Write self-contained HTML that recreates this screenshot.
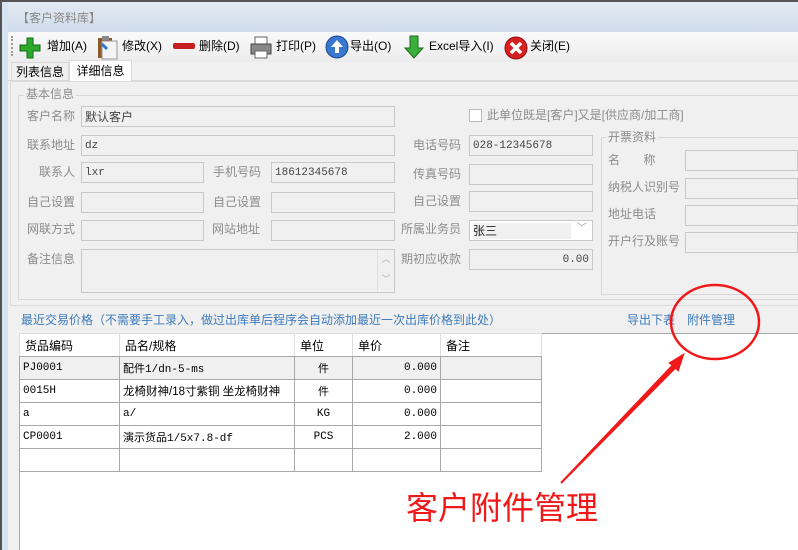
<!DOCTYPE html>
<html><head><meta charset="utf-8"><style>
*{margin:0;padding:0;box-sizing:border-box}
body{width:798px;height:550px;overflow:hidden;background:#f0f0f0;font-family:"Liberation Sans","Noto Sans CJK SC",sans-serif;font-size:12px;color:#000;position:relative}
.a{position:absolute}
.lbl{position:absolute;color:#8c8c8c;font-size:12px;line-height:20px}
.in{position:absolute;border:1px solid #c8c8c8;background:#f0f0f0;height:21px;font-family:"Liberation Mono","Noto Sans CJK SC",monospace;font-size:11px;color:#444;padding:1px 3px 0;line-height:14px;display:flex;align-items:center}
.tb{position:absolute;top:37px;font-size:12px;line-height:18px}
table{border-collapse:collapse;font-size:11px}
td{border:1px solid #a8a8a8;height:23px;padding:0 3px;font-family:"Liberation Mono","Noto Sans CJK SC",monospace;white-space:nowrap;vertical-align:middle}
th{border:1px solid #ddd;border-bottom:1px solid #a8a8a8;height:23px;font-weight:normal;text-align:left;padding:0 5px;font-family:"Liberation Sans","Noto Sans CJK SC",sans-serif;font-size:12px}
</style></head><body>
<div class="a" style="left:0;top:0;width:798px;height:32px;background:linear-gradient(#e4ebf3,#cfdcea)"></div>
<div class="a" style="left:0;top:0;width:798px;height:2px;background:#555"></div>
<div class="a" style="left:0;top:0;width:2px;height:550px;background:#555"></div>
<div class="a" style="left:2px;top:2px;width:6px;height:548px;background:#d6e4f2"></div>
<div class="a" style="left:17px;top:9px;color:#888;font-size:12px">【客户资料库】</div>
<div class="a" style="left:8px;top:32px;width:790px;height:30px;background:linear-gradient(#fafafa,#ececec)"></div>
<div class="a" style="left:11px;top:36px;width:2px;height:20px;border-left:2px dotted #999"></div>
<svg class="a" style="left:18px;top:36px" width="24" height="24"><path d="M9 2h6v7h7v6h-7v7H9v-7H2V9h7z" fill="#2daa2d" stroke="#156815"/></svg>
<div class="tb" style="left:47px">增加(A)</div>
<svg class="a" style="left:96px;top:35px" width="24" height="25"><rect x="2" y="3" width="14" height="20" fill="#8a5a2a"/><rect x="6" y="6" width="15" height="18" fill="#f4f4f4" stroke="#999"/><rect x="6" y="1" width="7" height="4" fill="#888"/><path d="M6 9l5 5" stroke="#2a7ad0" stroke-width="3"/></svg>
<div class="tb" style="left:122px">修改(X)</div>
<div class="a" style="left:173px;top:43px;width:22px;height:6px;background:#c42020;border-radius:2px"></div>
<div class="tb" style="left:199px">删除(D)</div>
<svg class="a" style="left:249px;top:35px" width="24" height="25"><rect x="6" y="2" width="12" height="8" fill="#fff" stroke="#666"/><rect x="2" y="9" width="20" height="10" fill="#888" stroke="#444"/><rect x="6" y="16" width="12" height="7" fill="#fff" stroke="#666"/></svg>
<div class="tb" style="left:276px">打印(P)</div>
<svg class="a" style="left:325px;top:35px" width="24" height="24"><circle cx="12" cy="12" r="11" fill="#3a78d0" stroke="#1a4a90"/><path d="M12 5l6 7h-4v6h-4v-6H6z" fill="#fff"/></svg>
<div class="tb" style="left:350px">导出(O)</div>
<svg class="a" style="left:403px;top:35px" width="22" height="25"><path d="M7 1h8v12h5l-9 10-9-10h5z" fill="#3cae3c" stroke="#1c6a1c"/></svg>
<div class="tb" style="left:429px">Excel导入(I)</div>
<svg class="a" style="left:504px;top:36px" width="24" height="24"><circle cx="12" cy="12" r="11" fill="#d82020" stroke="#901010"/><path d="M7 7l10 10M17 7L7 17" stroke="#fff" stroke-width="3.5"/></svg>
<div class="tb" style="left:530px">关闭(E)</div>
<div class="a" style="left:8px;top:80px;width:790px;height:1px;background:#d9d9d9"></div>
<div class="a" style="left:11px;top:62px;width:58px;height:19px;border:1px solid #d9d9d9;border-bottom:none;font-size:12px;line-height:18px;text-align:center">列表信息</div>
<div class="a" style="left:69px;top:60px;width:63px;height:21px;border:1px solid #d9d9d9;border-bottom:none;background:#fff;font-size:12px;line-height:20px;text-align:center">详细信息</div>
<div class="a" style="left:10px;top:81px;width:788px;height:225px;border:1px solid #dcdcdc;border-right:none"></div>
<div class="a" style="left:18px;top:95px;width:780px;height:205px;border:1px solid #d8d8d8;border-right:none"></div>
<div class="lbl" style="left:24px;top:84px;background:#f0f0f0;padding:0 2px">基本信息</div>
<div class="lbl" style="left:27px;top:106px">客户名称</div><div class="in" style="left:81px;top:106px;width:314px;font-family:'Liberation Sans','Noto Sans CJK SC',sans-serif;font-size:12px">默认客户</div>
<div class="lbl" style="left:27px;top:135px">联系地址</div><div class="in" style="left:81px;top:135px;width:314px">dz</div>
<div class="lbl" style="left:39px;top:162px">联系人</div><div class="in" style="left:81px;top:162px;width:123px">lxr</div>
<div class="lbl" style="left:213px;top:162px">手机号码</div><div class="in" style="left:271px;top:162px;width:124px">18612345678</div>
<div class="lbl" style="left:27px;top:192px">自己设置</div><div class="in" style="left:81px;top:192px;width:123px"></div>
<div class="lbl" style="left:213px;top:192px">自己设置</div><div class="in" style="left:271px;top:192px;width:124px"></div>
<div class="lbl" style="left:27px;top:219px">网联方式</div><div class="in" style="left:81px;top:220px;width:123px"></div>
<div class="lbl" style="left:212px;top:219px">网站地址</div><div class="in" style="left:271px;top:220px;width:124px"></div>
<div class="lbl" style="left:27px;top:249px">备注信息</div><div class="in" style="left:81px;top:249px;width:314px;height:44px"><div class="a" style="right:0;top:0;width:17px;height:42px;border-left:1px solid #e0e0e0;color:#aaa;font-size:9px;text-align:center;line-height:20px">︿<br>﹀</div></div>
<div class="a" style="left:469px;top:109px;width:13px;height:13px;border:1px solid #bbb;background:#fff"></div>
<div class="lbl" style="left:487px;top:105px">此单位既是[客户]又是[供应商/加工商]</div>
<div class="lbl" style="left:413px;top:135px">电话号码</div><div class="in" style="left:469px;top:135px;width:124px">028-12345678</div>
<div class="lbl" style="left:413px;top:164px">传真号码</div><div class="in" style="left:469px;top:164px;width:124px"></div>
<div class="lbl" style="left:413px;top:191px">自己设置</div><div class="in" style="left:469px;top:191px;width:124px"></div>
<div class="lbl" style="left:401px;top:219px">所属业务员</div><div class="in" style="left:469px;top:220px;width:124px;background:#fff;font-family:'Liberation Sans','Noto Sans CJK SC',sans-serif;font-size:12px;color:#222"><span style="background:#f0f0f0;display:inline-block;width:98px;line-height:16px">张三</span><span class="a" style="right:5px;top:1px;color:#999;font-size:10px">﹀</span></div>
<div class="lbl" style="left:401px;top:249px">期初应收款</div><div class="in" style="left:469px;top:249px;width:124px;justify-content:flex-end">0.00</div>
<div class="a" style="left:601px;top:137px;width:197px;height:158px;border:1px solid #d8d8d8;border-right:none"></div>
<div class="lbl" style="left:606px;top:127px;background:#f0f0f0;padding:0 2px">开票资料</div>
<div class="lbl" style="left:608px;top:150px">名&nbsp;&nbsp;&nbsp;&nbsp;&nbsp;&nbsp;&nbsp;称</div><div class="in" style="left:685px;top:150px;width:113px"></div>
<div class="lbl" style="left:608px;top:177px">纳税人识别号</div><div class="in" style="left:685px;top:178px;width:113px"></div>
<div class="lbl" style="left:608px;top:204px">地址电话</div><div class="in" style="left:685px;top:205px;width:113px"></div>
<div class="lbl" style="left:608px;top:231px">开户行及账号</div><div class="in" style="left:685px;top:232px;width:113px"></div>
<div class="a" style="left:21px;top:311px;color:#3d7bbd;font-size:12px">最近交易价格（不需要手工录入，做过出库单后程序会自动添加最近一次出库价格到此处）</div>
<div class="a" style="left:627px;top:311px;color:#3d7bbd;font-size:12px">导出下表</div>
<div class="a" style="left:687px;top:311px;color:#3d7bbd;font-size:12px">附件管理</div>
<div class="a" style="left:19px;top:333px;width:779px;height:217px;background:#fff;border-top:1px solid #a8a8a8;border-left:1px solid #a8a8a8"></div>
<table class="a" style="left:19px;top:333px;width:522px;table-layout:fixed">
<colgroup><col style="width:100px"><col style="width:175px"><col style="width:58px"><col style="width:88px"><col style="width:101px"></colgroup>
<tr><th>货品编码</th><th>品名/规格</th><th>单位</th><th>单价</th><th>备注</th></tr>
<tr style="background:#f0f0f0"><td>PJ0001</td><td>配件1/dn-5-ms</td><td style="text-align:center">件</td><td style="text-align:right">0.000</td><td></td></tr>
<tr><td>0015H</td><td style="font-family:'Liberation Sans','Noto Sans CJK SC',sans-serif;font-size:11.5px">龙椅财神/18寸紫铜 坐龙椅财神</td><td style="text-align:center">件</td><td style="text-align:right">0.000</td><td></td></tr>
<tr><td>a</td><td>a/</td><td style="text-align:center">KG</td><td style="text-align:right">0.000</td><td></td></tr>
<tr><td>CP0001</td><td>演示货品1/5x7.8-df</td><td style="text-align:center">PCS</td><td style="text-align:right">2.000</td><td></td></tr>
<tr><td></td><td></td><td></td><td></td><td></td></tr>
</table>
<svg class="a" style="left:0;top:0" width="798" height="550">
<ellipse cx="715" cy="322" rx="44" ry="37" fill="none" stroke="#f01818" stroke-width="2.5"/>
<path d="M561 483L676 367L670 363L683 355L678 370L673 365Z" fill="#f01818" stroke="#f01818" stroke-width="2"/>
</svg>
<div class="a" style="left:406px;top:489px;color:#f01818;font-size:32px;line-height:38px">客户附件管理</div>
</body></html>
